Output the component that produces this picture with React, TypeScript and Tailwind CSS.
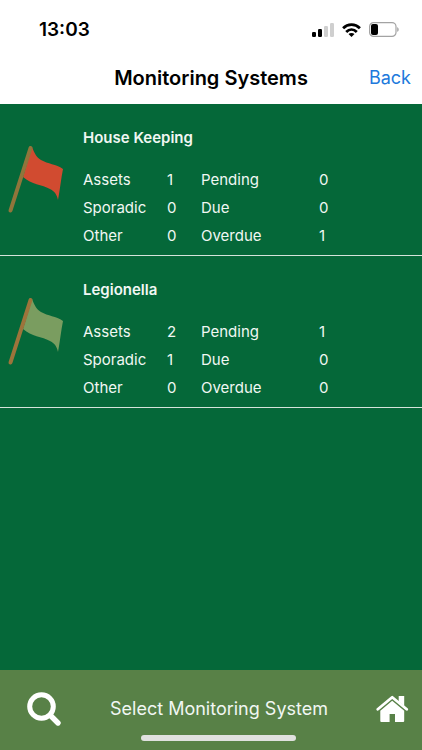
interface Stat {
  label: string;
  value: number;
}

interface MonitoringSystem {
  name: string;
  flagColor: string;
  poleColor: string;
  rows: [Stat, Stat][];
}

const systems: MonitoringSystem[] = [
  {
    name: "House Keeping",
    flagColor: "#d14b30",
    poleColor: "#90753b",
    rows: [
      [{ label: "Assets", value: 1 }, { label: "Pending", value: 0 }],
      [{ label: "Sporadic", value: 0 }, { label: "Due", value: 0 }],
      [{ label: "Other", value: 0 }, { label: "Overdue", value: 1 }],
    ],
  },
  {
    name: "Legionella",
    flagColor: "#7a9d60",
    poleColor: "#9d743b",
    rows: [
      [{ label: "Assets", value: 2 }, { label: "Pending", value: 1 }],
      [{ label: "Sporadic", value: 1 }, { label: "Due", value: 0 }],
      [{ label: "Other", value: 0 }, { label: "Overdue", value: 0 }],
    ],
  },
];

function StatusBar() {
  return (
    <div className="flex h-[52px] items-center justify-between pt-[7px] pl-[39px] pr-[23px]">
      <span className="text-[19px] leading-6 font-semibold">13:03</span>
      <div className="flex items-center gap-2">
        <svg width="22" height="14" viewBox="0 0 22 14" aria-hidden="true">
          <rect x="0" y="9" width="4" height="5" rx="1.2" fill="#000" />
          <rect x="6" y="6" width="4" height="8" rx="1.2" fill="#000" />
          <rect x="12" y="3" width="4" height="11" rx="1.2" fill="#cfcfcf" />
          <rect x="18" y="0" width="4" height="14" rx="1.2" fill="#cfcfcf" />
        </svg>
        <svg width="19" height="14" viewBox="0 0 19 14" fill="none" stroke="#000" strokeWidth="2.8" aria-hidden="true">
          <path d="M1.1 5.2C5.8.5 13.2.5 17.9 5.2" />
          <path d="M4.2 8.9c3.1-3 7.5-3 10.6 0" />
          <path d="M6.5 11.1c1.7-1.6 4.3-1.6 6 0L9.5 14z" fill="#000" stroke="none" />
        </svg>
        <svg width="30" height="15" viewBox="0 0 30 15" aria-hidden="true">
          <rect x=".6" y=".6" width="26.4" height="13.8" rx="4" fill="none" stroke="#a3a3a3" strokeWidth="1.2" />
          <rect x="2" y="2" width="7" height="11" rx="2" fill="#000" />
          <path d="M28.2 5.2c2 .6 2 4 0 4.6z" fill="#a3a3a3" />
        </svg>
      </div>
    </div>
  );
}

function FlagIcon({ flagColor, poleColor }: { flagColor: string; poleColor: string }) {
  return (
    <svg width="75" height="85" viewBox="0 0 75 85" className="mt-[31px] shrink-0" aria-hidden="true">
      <path
        d="M32 12C34 17 36 22 41 25C48 29 56 29 63 34C61 44 60 54 58 65C57 60 55 57 51 54.500C41 49 32 50 23 42Z"
        fill={flagColor}
      />
      <path d="M30.5 13 10.500 75.500" stroke={poleColor} strokeWidth="4" strokeLinecap="round" />
    </svg>
  );
}

function SystemRow({ system }: { system: MonitoringSystem }) {
  return (
    <li className="flex border-b border-[#d5e4da]">
      <FlagIcon flagColor={system.flagColor} poleColor={system.poleColor} />
      <div className="min-w-0 flex-1 pt-[22px] pb-[5px] pl-2">
        <h2 className="text-[15px] leading-6 font-semibold">{system.name}</h2>
        <table className="mt-4 w-full table-fixed text-left text-[15px]">
          <colgroup>
            <col className="w-[84px]" />
            <col className="w-[34px]" />
            <col className="w-[118px]" />
            <col />
          </colgroup>
          <tbody>
            {system.rows.map(([left, right]) => (
              <tr key={left.label} className="h-7">
                <th scope="row" className="p-0 font-normal">{left.label}</th>
                <td className="p-0">{left.value}</td>
                <th scope="row" className="p-0 font-normal">{right.label}</th>
                <td className="p-0">{right.value}</td>
              </tr>
            ))}
          </tbody>
        </table>
      </div>
    </li>
  );
}

export default function App() {
  return (
    <div className="flex min-h-screen flex-col bg-[#056839] font-['Inter','Liberation_Sans',sans-serif] text-[#f1f7f3]">
      <header className="bg-white text-black">
        <StatusBar />
        <div className="grid h-[52px] grid-cols-[1fr_auto_1fr] items-center px-[11px]">
          <h1 className="col-start-2 text-[20px] leading-7 font-semibold">Monitoring Systems</h1>
          <button type="button" className="justify-self-end text-[18px] leading-7 text-[#2079dc]">
            Back
          </button>
        </div>
      </header>

      <main className="flex-1">
        <ul>
          {systems.map((system) => (
            <SystemRow key={system.name} system={system} />
          ))}
        </ul>
      </main>

      <footer className="relative flex h-20 items-center justify-between bg-[#588147] pr-[13px] pb-[2px] pl-[26px]">
        <button type="button" aria-label="Search">
          <svg width="36" height="36" viewBox="0 0 36 36" fill="none" stroke="#fff" strokeLinecap="round">
            <circle cx="15.5" cy="15.5" r="11.8" strokeWidth="5" />
            <path d="M25 25l7 7" strokeWidth="5.400" />
          </svg>
        </button>
        <p className="text-[18px] leading-7">Select Monitoring System</p>
        <button type="button" aria-label="Home">
          <svg width="33" height="28" viewBox="0 0 33 28" fill="#fff">
            <path d="M22.7 1h5.500v10l-5.500-4.500z" />
            <path
              d="M1.8 14.300 16.200 2.200l14.500 12.100"
              fill="none"
              stroke="#fff"
              strokeWidth="2.800"
              strokeLinecap="round"
              strokeLinejoin="round"
            />
            <path d="M16.200 5.800 28.200 15.800V26a1 1 0 0 1-1 1H19v-8h-5.400v8H5.300a1 1 0 0 1-1-1V15.800z" />
          </svg>
        </button>
        <div className="absolute inset-x-0 bottom-[9px] flex justify-center pl-[15px]">
          <div className="h-[6px] w-[155px] rounded-full bg-[#e0e1df]" />
        </div>
      </footer>
    </div>
  );
}
